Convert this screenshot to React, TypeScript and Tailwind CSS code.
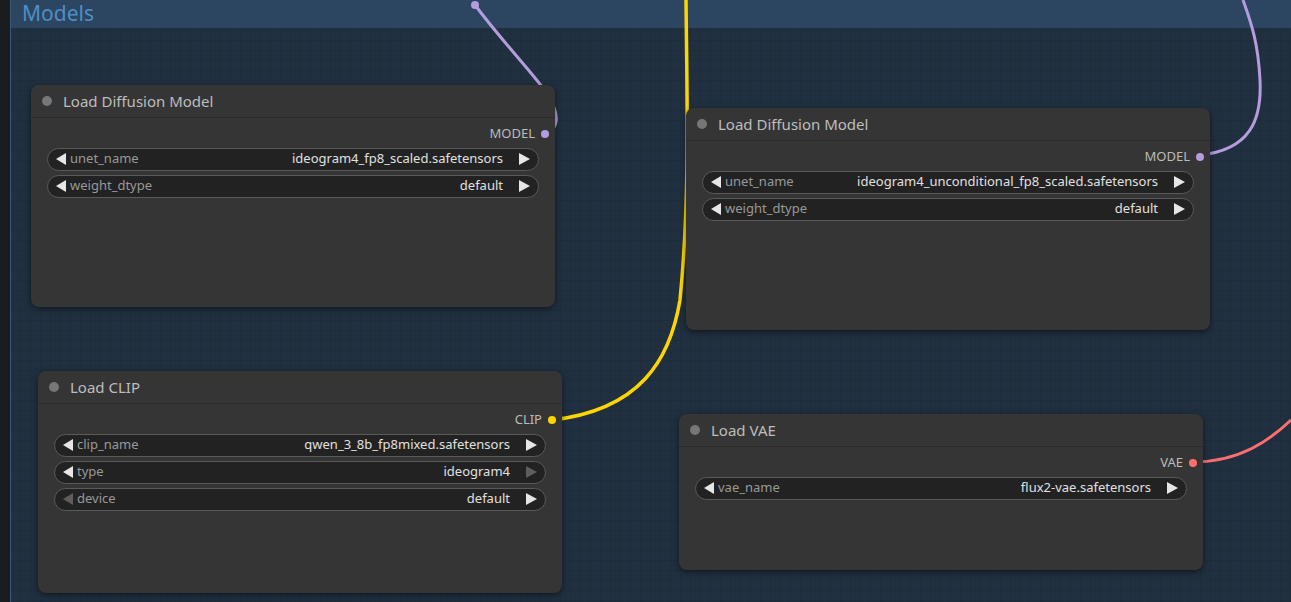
type Widget = { name: string; value: string; dimLeft?: boolean; dimRight?: boolean };
type NodeDef = {
  title: string;
  x: number; y: number; w: number; h: number;
  out: string; dot: string;
  widgets: Widget[];
};

const nodes: NodeDef[] = [
  { title: "Load Diffusion Model", x: 31, y: 85, w: 524, h: 222, out: "MODEL", dot: "#b39ddb",
    widgets: [{ name: "unet_name", value: "ideogram4_fp8_scaled.safetensors" }, { name: "weight_dtype", value: "default" }] },
  { title: "Load Diffusion Model", x: 686, y: 108, w: 524, h: 222, out: "MODEL", dot: "#b39ddb",
    widgets: [{ name: "unet_name", value: "ideogram4_unconditional_fp8_scaled.safetensors" }, { name: "weight_dtype", value: "default" }] },
  { title: "Load CLIP", x: 38, y: 371, w: 524, h: 222, out: "CLIP", dot: "#ffd500",
    widgets: [{ name: "clip_name", value: "qwen_3_8b_fp8mixed.safetensors" }, { name: "type", value: "ideogram4", dimRight: true }, { name: "device", value: "default", dimLeft: true }] },
  { title: "Load VAE", x: 679, y: 414, w: 524, h: 156, out: "VAE", dot: "#ff6e6e",
    widgets: [{ name: "vae_name", value: "flux2-vae.safetensors" }] },
];

function Tri({ left, dim }: { left?: boolean; dim?: boolean }) {
  return (
    <svg width="11" height="12" viewBox="0 0 11 12">
      <path d={left ? "M10 0 L10 12 L0 6 Z" : "M0 0 L0 12 L11 6 Z"} fill={dim ? "#5e5e5e" : "#e6e6e6"} />
    </svg>
  );
}

function Node({ n }: { n: NodeDef }) {
  return (
    <div
      className="absolute rounded-lg bg-[#353535] shadow-[0_2px_6px_rgba(0,0,0,0.5)]"
      style={{ left: n.x, top: n.y, width: n.w, height: n.h }}
    >
      <div className="flex h-[33px] items-center gap-[11px] border-b border-[#2b2b2b] px-[11px] text-[15px] text-[#bdbdbd]">
        <span className="h-[10px] w-[10px] rounded-full bg-[#777]" />
        {n.title}
      </div>
      <div className="flex flex-col gap-[4px] px-[16px] pt-[6px]">
        <div className="flex items-center justify-end gap-[6px] text-[13px] text-[#bbb] -mr-[10px]">
          {n.out}
          <span className="h-[8px] w-[8px] rounded-full" style={{ background: n.dot }} />
        </div>
        {n.widgets.map((wd) => (
          <div key={wd.name} className="flex h-[23px] items-center rounded-full border border-[#5a5a5a] bg-[#222] px-[8px] text-[13px]">
            <Tri left dim={wd.dimLeft} />
            <span className="ml-[3px] flex-1 text-[#999]">{wd.name}</span>
            <span className="text-[#e0e0e0]">{wd.value}</span>
            <span className="ml-[16px] flex"><Tri dim={wd.dimRight} /></span>
          </div>
        ))}
      </div>
    </div>
  );
}

export default function App() {
  return (
    <div
      className="relative h-[602px] w-[1291px] overflow-hidden bg-[#1e2b36] font-['Liberation_Sans']"
      style={{
        backgroundImage:
          "linear-gradient(rgba(0,0,0,0.18) 1px, transparent 1px), linear-gradient(90deg, rgba(0,0,0,0.18) 1px, transparent 1px)",
        backgroundSize: "10px 10px",
      }}
    >
      <div className="absolute left-0 top-0 h-full w-[10px] bg-[#1a1d20]" />
      <div className="absolute left-[10px] top-0 h-full w-[1281px] bg-[#223447]/60 border-l border-[#3a5a78]">
        <div className="h-[28px] bg-[#2c4560] pl-[11px] text-[21px] leading-[26px] text-[#4d8fc4]">Models</div>
      </div>
      <svg className="absolute inset-0" width="1291" height="602">
        <path d="M475 5 C505 45 535 75 548 95 C560 115 558 128 548 132" stroke="#b39ddb" strokeWidth="3" fill="none" />
        <circle cx="475" cy="5" r="4" fill="#b39ddb" />
        <path d="M552 420 C640 410 670 360 680 300 C690 200 687 100 686 0" stroke="#ffd500" strokeWidth="3.5" fill="none" />
        <path d="M1200 155 C1250 150 1262 120 1260 80 C1258 40 1250 20 1243 0" stroke="#b39ddb" strokeWidth="3" fill="none" />
        <path d="M1193 462 C1240 462 1270 440 1291 420" stroke="#ff6e6e" strokeWidth="3" fill="none" />
      </svg>
      {nodes.map((n, i) => (
        <Node key={i} n={n} />
      ))}
    </div>
  );
}
